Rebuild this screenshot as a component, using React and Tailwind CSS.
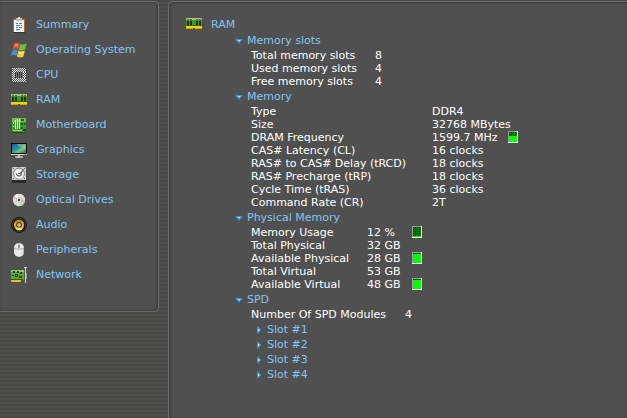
import React, { useState } from "react";

/* ─── Icons ─── */

const SummaryIcon = () => (
  <svg width="16" height="16" viewBox="0 0 16 16">
    <rect x="2" y="1.5" width="12" height="13.5" rx="1" fill="#c8601c" />
    <rect x="3" y="3" width="10" height="12" fill="#f2f6fa" />
    <rect x="5" y="1" width="6" height="3" fill="#b9bec4" />
    <rect x="7" y="0" width="2" height="2" fill="#e4e6e8" />
    <path d="M5 6.5h2M8 6.5h3M5 8.5h4M10 8.5h1M5 10.5h2M8 10.5h3M5 12.5h4" stroke="#2f86c4" strokeWidth="1" />
    <path d="M2 15.5h12" stroke="#333333" />
  </svg>
);

const WindowsIcon = () => (
  <svg width="16" height="16" viewBox="0 0 16 16">
    <path d="M3.2 1.600C5 .3 6.900 .4 8.600 1.400L7.100 7.400C5.300 6.300 3.500 6.300 1.500 7.400z" fill="#e8512c" />
    <path d="M9.200 1.900C11.100 3 13.200 2.800 15.600 1.600L14 7.800C11.900 8.900 9.700 8.900 7.600 7.800z" fill="#6fbe3a" />
    <path d="M1.400 8.200C3.400 7.200 5.100 7.200 6.900 8.200L5.400 13.900C3.700 12.800 1.900 12.800 0 13.800z" fill="#3f8fe0" />
    <path d="M7.400 8.600C9.300 9.700 11.600 9.700 13.900 8.600L12.400 14.500C10.200 15.800 8 15.700 5.900 14.500z" fill="#fbc92c" />
    <path d="M4 2.600C5.200 2 6.300 2 7.400 2.500L6.900 4.200C5.700 3.700 4.600 3.800 3.500 4.300z" fill="#f6a184" />
    <path d="M8.200 10C9.700 10.700 11.300 10.700 12.700 10.100L12.300 11.500C10.700 12.100 9.300 12.100 7.800 11.400z" fill="#fff0a0" />
  </svg>
);

const CpuIcon = () => (
  <svg width="16" height="16" viewBox="0 0 16 16" shapeRendering="crispEdges">
    <rect x="1" y="1" width="14" height="14" fill="#585858" />
    <path
      d="M1 1.500h14M1 3.500h14M1 5.500h3M12 5.500h3M1 7.500h3M12 7.500h3M1 9.500h3M12 9.500h3M1 11.500h14M1 13.500h14"
      stroke="#eeeeee" strokeDasharray="1 1"
    />
    <path
      d="M2 2.500h13M2 4.500h13M2 6.500h2M13 6.500h2M2 8.500h2M13 8.500h2M2 10.500h2M13 10.500h2M2 12.500h13M2 14.500h13"
      stroke="#d8d8d8" strokeDasharray="1 1"
    />
    <rect x="4" y="5" width="8" height="6" fill="#333333" />
    <path d="M5.500 5v6M7.500 5v6M9.500 5v6M11.500 5v6" stroke="#7a7a7a" />
  </svg>
);

const RamIcon = () => (
  <svg width="16" height="12" viewBox="0 0 16 12" shapeRendering="crispEdges">
    <rect width="16" height="8" fill="#3f9a24" />
    <rect width="16" height="2" fill="#a3c873" />
    <path d="M1 1h2v6H1zM4 1h2v6H4zM10 1h2v6h-2zM13 1h2v6h-2z" fill="#27331f" />
    <path d="M1 1h2v2H1zM4 1h2v2H4zM10 1h2v2h-2zM13 1h2v2h-2z" fill="#5c6b50" />
    <rect y="7" width="16" height="2" fill="#1d6a12" />
    <rect y="8" width="16" height="3" fill="#f4cf10" />
    <path d="M0 10h16v1H0z" fill="#dba50a" />
    <path d="M7 10h2v1H7z" fill="#4a4a20" />
  </svg>
);

const MotherboardIcon = () => (
  <svg width="16" height="16" viewBox="0 0 16 16" shapeRendering="crispEdges">
    <rect x="1" y="1" width="14" height="14" fill="#39a02c" />
    <path d="M1 1h14v4H1z" fill="#74bd48" />
    <path d="M4.500 3v9M6.500 2v10M8.500 2v10" stroke="#f4f8ee" />
    <path d="M2 5h1v2H2zM2 9h1v1H2z" fill="#e4efd8" />
    <path d="M10 2h3v2h-3zM10 6h2v2h-2zM13 6h2v2h-2zM10 10h2v2h-2z" fill="#2a5c22" />
    <path d="M12 12h3v2h-3z" fill="#174216" />
    <path d="M2 13h9v1H2z" fill="#a2d070" />
    <path d="M1 15h14v1H1z" fill="#2f3a2d" />
  </svg>
);

const GraphicsIcon = () => (
  <svg width="16" height="16" viewBox="0 0 16 16">
    <defs>
      <linearGradient id="screen" x1="0" y1="0" x2="1" y2="1">
        <stop offset="0" stopColor="#1b5aa0" />
        <stop offset="0.45" stopColor="#2595a0" />
        <stop offset="0.65" stopColor="#7fc070" />
        <stop offset="1" stopColor="#17669c" />
      </linearGradient>
    </defs>
    <rect x="0" y="1" width="16" height="12" fill="#080808" />
    <rect x="1" y="2" width="14" height="9" fill="url(#screen)" />
    <path d="M6 2C8 5 11 6.500 15 7V2z" fill="#b9dc6c" opacity="0.45" />
    <path d="M0 12.500h16" stroke="#d8d8d8" />
    <path d="M13 12.500h2" stroke="#42d838" />
    <path d="M7 13h2v1.500H7z" fill="#a8a8a8" />
    <ellipse cx="8" cy="15" rx="4" ry="0.900" fill="#c9c9c9" />
  </svg>
);

const StorageIcon = () => (
  <svg width="16" height="16" viewBox="0 0 16 16">
    <rect x="1" y="0" width="14" height="15" rx="1" fill="#cfcfcf" />
    <rect x="1" y="13" width="14" height="3" fill="#2a2a2a" />
    <circle cx="8" cy="6.500" r="5.400" fill="#f2f2f2" stroke="#777777" strokeWidth="1" />
    <path d="M3.800 8.800A5 5 0 0 0 12 9.200" stroke="#ffffff" strokeWidth="1.200" fill="none" />
    <path d="M5.500 6.500a2.500 2.500 0 1 0 4.500 -1.500M7 6.500h2L13 2.500" stroke="#5e5e5e" strokeWidth="1.100" fill="none" />
    <path d="M2 1.500h1M13 1.500h1M2 11.500h1M13 11.500h1" stroke="#666666" />
  </svg>
);

const OpticalIcon = () => (
  <svg width="16" height="16" viewBox="0 0 16 16">
    <circle cx="8" cy="8" r="6.200" fill="#dedede" />
    <path d="M8 8L3 4.300A6.200 6.200 0 0 1 6.500 2z" fill="#f6f6f6" />
    <path d="M8 8L2 7A6.200 6.200 0 0 1 3 4.300z" fill="#e7b6dc" />
    <path d="M8 8L14 7.300A6.200 6.200 0 0 1 13 11.600z" fill="#e6a8d4" />
    <path d="M8 8L13 11.600A6.200 6.200 0 0 1 9.800 13.900z" fill="#a5e67c" />
    <path d="M8 8L9 1.900A6.200 6.200 0 0 1 12 3.300z" fill="#e9e9b8" />
    <circle cx="8" cy="8" r="2.600" fill="#f5f5f5" stroke="#aaaaaa" strokeWidth="0.600" />
    <circle cx="8" cy="8" r="1.300" fill="#454545" />
  </svg>
);

const AudioIcon = () => (
  <svg width="16" height="16" viewBox="0 0 16 16">
    <circle cx="8" cy="8" r="7.900" fill="#111111" />
    <circle cx="8" cy="8" r="6.700" fill="none" stroke="#4c4c4c" strokeWidth="0.700" />
    <circle cx="8" cy="8" r="5.200" fill="#d9a520" />
    <path d="M8 8L11.500 11.800A5.200 5.200 0 0 1 4.500 11.800z" fill="#f8e258" />
    <path d="M8 8L4.500 4.200A5.200 5.200 0 0 1 11.500 4.200z" fill="#b98a18" />
    <circle cx="8" cy="8" r="2.800" fill="#3a2f14" />
    <circle cx="8" cy="8" r="1.800" fill="#ece6d0" />
    <circle cx="8" cy="8" r="0.700" fill="#555555" />
  </svg>
);

const MouseIcon = () => (
  <svg width="16" height="16" viewBox="0 0 16 16">
    <rect x="3" y="1" width="10" height="14" rx="5" fill="#e9e9e9" />
    <path d="M12 5v5a4.500 4.500 0 0 1-4 4.800a5 5 0 0 0 5-4.800V6z" fill="#b3b3b3" />
    <path d="M3 6.500q5 1.500 10 0M8 1v2M8 5.500v1.500" stroke="#a0a0a0" strokeWidth="0.800" fill="none" />
    <rect x="7" y="2.500" width="2" height="3.500" rx="1" fill="#8c8c8c" />
  </svg>
);

const NetworkIcon = () => (
  <svg width="16" height="16" viewBox="0 0 16 16" shapeRendering="crispEdges">
    <rect x="0" y="3" width="13" height="10" fill="#58a835" />
    <path d="M0 3h13v2H0z" fill="#9ccb6c" />
    <path d="M2 4h2v2H2zM6 4h2v2H6zM9 5h2v2H9zM1 8h2v1H1zM4 7h3v3H4zM8 9h3v2H8z" fill="#25471c" />
    <path d="M5 8h1v1H5z" fill="#8e8e8e" />
    <path d="M0 13h10v2H0z" fill="#efb616" />
    <path d="M0 12h12v1H0z" fill="#246314" />
    <path d="M14 1h1v15h-1zM13 0h3v1h-3z" fill="#d5d5d5" />
    <path d="M13 1h1v13h-1z" fill="#555555" />
    <path d="M15 6h1v6h-1z" fill="#8e8e8e" />
  </svg>
);

const Arrow = ({ open }) => (
  <svg width="8" height="8" viewBox="0 0 8 8" className="shrink-0">
    {open ? (
      <>
        <path d="M0.500 2h7v1L4 6.500L0.500 3z" fill="#3296dc" />
        <path d="M2.500 3h3L4 4.800z" fill="#c8ecff" />
      </>
    ) : (
      <>
        <path d="M2 0.500h1L6.300 4L3 7.500H2z" fill="#3296dc" />
        <path d="M3 2.500v3L4.800 4z" fill="#c8ecff" />
      </>
    )}
  </svg>
);

// Small level box: dark dotted grid on top, filled green from the bottom
const Meter = ({ percent }) => {
  const fill = Math.round((percent / 100) * 10);
  return (
    <svg width="10" height="12" viewBox="0 0 10 12" shapeRendering="crispEdges" className="inline-block align-top">
      <rect width="10" height="12" fill="#ffffff" />
      <path d="M0 0h9v1H1v10H0z" fill="#a0a0a0" />
      <rect x="1" y="1" width="8" height="10" fill="#008000" />
      <path d="M1 1.500h8M1 3.500h8M1 5.500h8M1 7.500h8M1 9.500h8" stroke="#003000" strokeDasharray="1 1" />
      <rect x="1" y={11 - fill} width="8" height={fill} fill="#00ff00" />
    </svg>
  );
};

/* ─── Data ─── */

const navItems = [
  { label: "Summary", icon: SummaryIcon },
  { label: "Operating System", icon: WindowsIcon },
  { label: "CPU", icon: CpuIcon },
  { label: "RAM", icon: RamIcon },
  { label: "Motherboard", icon: MotherboardIcon },
  { label: "Graphics", icon: GraphicsIcon },
  { label: "Storage", icon: StorageIcon },
  { label: "Optical Drives", icon: OpticalIcon },
  { label: "Audio", icon: AudioIcon },
  { label: "Peripherals", icon: MouseIcon },
  { label: "Network", icon: NetworkIcon },
];

const slotRows = [
  ["Total memory slots", "8"],
  ["Used memory slots", "4"],
  ["Free memory slots", "4"],
];

const memoryRows = [
  ["Type", "DDR4"],
  ["Size", "32768 MBytes"],
  ["DRAM Frequency", "1599.7 MHz", 60],
  ["CAS# Latency (CL)", "16 clocks"],
  ["RAS# to CAS# Delay (tRCD)", "18 clocks"],
  ["RAS# Precharge (tRP)", "18 clocks"],
  ["Cycle Time (tRAS)", "36 clocks"],
  ["Command Rate (CR)", "2T"],
];

const physicalRows = [
  ["Memory Usage", "12 %", 12],
  ["Total Physical", "32 GB"],
  ["Available Physical", "28 GB", 88],
  ["Total Virtual", "53 GB"],
  ["Available Virtual", "48 GB", 88],
];

/* ─── Building blocks ─── */

const Section = ({ title, children }) => {
  const [open, setOpen] = useState(true);
  return (
    <section>
      <h2>
        <button
          type="button"
          aria-expanded={open}
          onClick={() => setOpen(!open)}
          className="flex h-[17px] cursor-pointer items-center gap-1 text-[#84c6f2]"
        >
          <Arrow open={open} />
          {title}
        </button>
      </h2>
      {open && <div className="pl-4">{children}</div>}
    </section>
  );
};

const InfoTable = ({ rows, labelWidth, valueWidth = "" }) => (
  <table className="border-collapse leading-[13px] whitespace-nowrap text-white">
    <tbody>
      {rows.map(([label, value, percent]) => (
        <tr key={label} className="h-[13px]">
          <th scope="row" className={`p-0 text-left font-normal ${labelWidth}`}>{label}</th>
          <td className="p-0">
            <span className={`inline-block align-top ${valueWidth}`}>{value}</span>
            {percent !== undefined && (
              <span className="inline-block h-[13px] pl-2.5 align-top"><Meter percent={percent} /></span>
            )}
          </td>
        </tr>
      ))}
    </tbody>
  </table>
);

const Slot = ({ name }) => {
  const [open, setOpen] = useState(false);
  return (
    <li>
      <button
        type="button"
        aria-expanded={open}
        onClick={() => setOpen(!open)}
        className="flex h-[15px] cursor-pointer items-center gap-1 text-[#84c6f2]"
      >
        <Arrow open={open} />
        {name}
      </button>
    </li>
  );
};

const App = () => {
  return (
    <div className="flex min-h-screen items-start gap-[9px] bg-[repeating-linear-gradient(180deg,#484846_0px,#484846_2px,#50504e_2px,#50504e_4px)] pt-px font-['Verdana','DejaVu_Sans',sans-serif] text-[11px] leading-[15px]">

      {/* Sidebar */}
      <nav className="w-[159px] shrink-0 rounded-r-[5px] border-y border-r border-[#6c6c6c] bg-[#505050] pt-2.5 pb-6 shadow-[inset_-1px_0_3px_#383838]">
        <ul>
          {navItems.map(({ label, icon: Icon }) => (
            <li key={label}>
              <a href="#" className="flex h-[25px] items-center gap-[9px] pl-[11px] text-[#84c6f2]">
                <span className="flex w-4 justify-center"><Icon /></span>
                {label}
              </a>
            </li>
          ))}
        </ul>
      </nav>

      {/* Details */}
      <main className="min-w-0 flex-1 self-stretch rounded-tl-[5px] border-t border-l border-[#6c6c6c] bg-[#505050] pt-3.5 pl-[17px] shadow-[inset_1px_1px_3px_#383838]">
        <h1 className="flex h-4 items-center gap-[9px] text-[#84c6f2]">
          <RamIcon />
          RAM
        </h1>

        <div className="pl-[49px]">
          <Section title="Memory slots">
            <InfoTable rows={slotRows} labelWidth="w-[124px]" />
          </Section>

          <Section title="Memory">
            <InfoTable rows={memoryRows} labelWidth="w-[181px]" valueWidth="min-w-[66px]" />
          </Section>

          <Section title="Physical Memory">
            <InfoTable rows={physicalRows} labelWidth="w-[116px]" valueWidth="w-[35px]" />
          </Section>

          <Section title="SPD">
            <InfoTable rows={[["Number Of SPD Modules", "4"]]} labelWidth="w-[154px]" />
            <ul className="pt-px pl-1">
              <Slot name="Slot #1" />
              <Slot name="Slot #2" />
              <Slot name="Slot #3" />
              <Slot name="Slot #4" />
            </ul>
          </Section>
        </div>
      </main>
    </div>
  );
};

export default App;
